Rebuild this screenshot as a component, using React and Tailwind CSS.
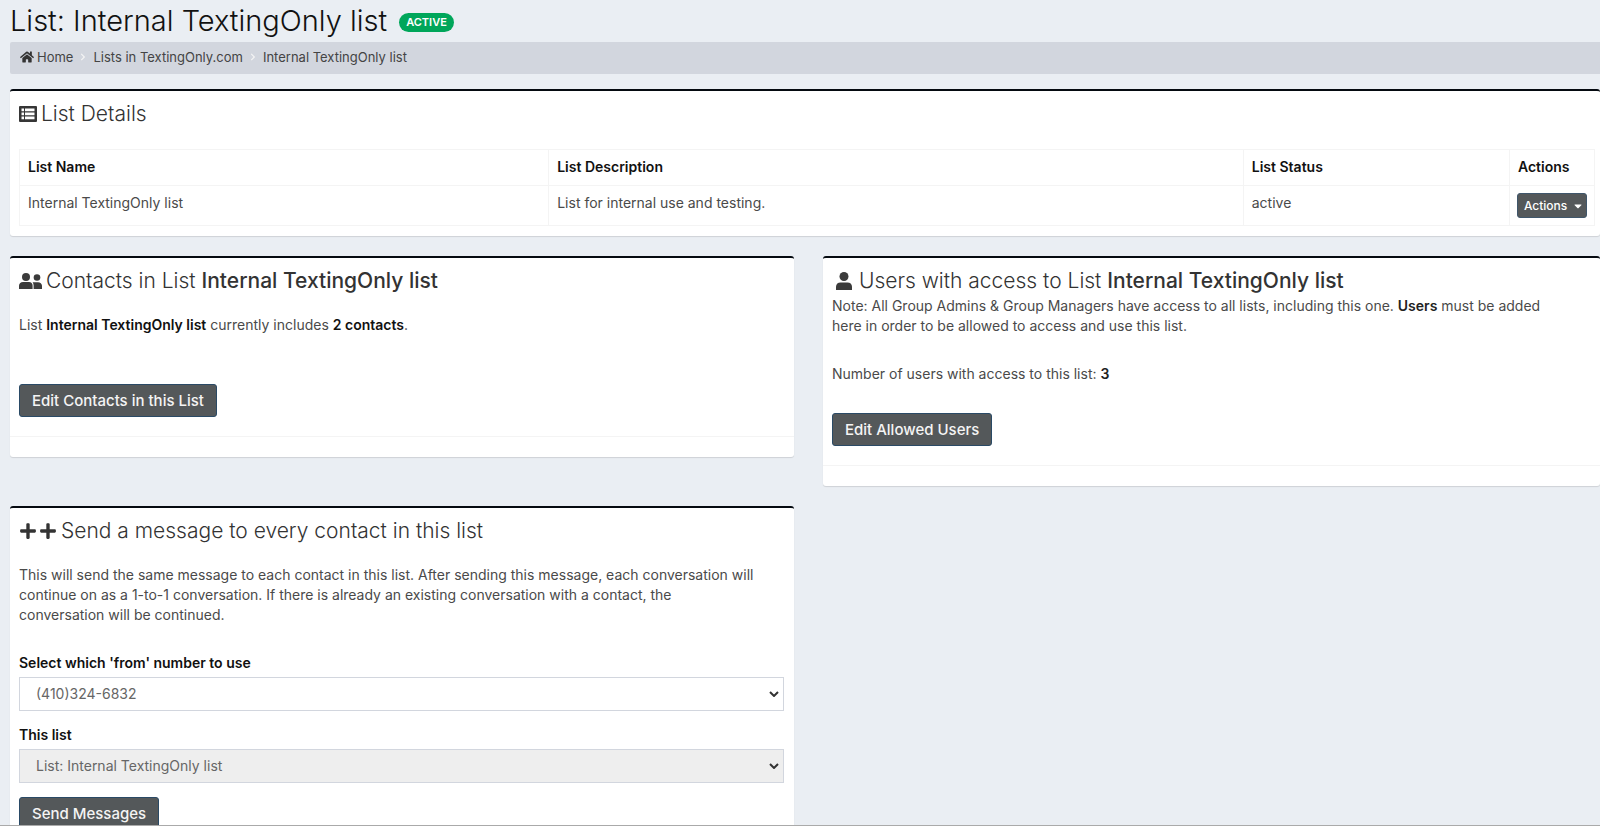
import { FaHome, FaPlus, FaChevronRight, FaCaretDown } from 'react-icons/fa';

const LIST_NAME = 'Internal TextingOnly list';

function ListIcon() {
  return (
    <svg viewBox="0 0 18 16" className="h-4 w-[18px] shrink-0" aria-hidden="true">
      <rect width="18" height="16" rx="1" fill="#363636" />
      <path fill="#fff" d="M2.500 2.500h2.500v2.700H2.500zM6 2.500h9.500v2.700H6zM2.500 6.500h2.500v2.700H2.500zM6 6.500h9.500v2.700H6zM2.500 10.500h2.500v2.700H2.500zM6 10.500h9.500v2.700H6z" />
    </svg>
  );
}

function UserIcon() {
  return (
    <svg viewBox="0 0 18 18" className="mr-[2px] ml-[3px] h-[18px] w-[18px] shrink-0" fill="#3b3b3b" aria-hidden="true">
      <circle cx="9" cy="4.5" r="4.5" />
      <path d="M1 18v-3.5C1 12 3 10.400 5.500 10.400h7c2.500 0 4.500 1.600 4.500 4.100V18z" />
    </svg>
  );
}

function UsersIcon() {
  return (
    <svg viewBox="0 0 23 16" className="h-4 w-[23px] shrink-0" fill="#3b3b3b" aria-hidden="true">
      <circle cx="7" cy="4" r="4" />
      <path d="M0 16v-3.200C0 10.500 1.800 9 4 9h6c2.200 0 3.600 1.500 3.600 3.800V16z" />
      <circle cx="18" cy="4.500" r="3.300" />
      <path d="M14.600 16v-3.400c0-1.400-.3-2.500-1-3.400h5.400c2.200 0 4 1.500 4 3.600V16z" />
    </svg>
  );
}

function Panel({ icon, title, footer, className = 'pr-[10px]', children }) {
  return (
    <section className={`rounded-[3px] border-t-2 border-[#050a10] bg-white pl-[9px] shadow-[0_1px_1px_rgba(0,0,0,0.12)] ${className}`}>
      <h2 className="flex items-center gap-1 pt-[10px] text-[21px] leading-[26px] font-light whitespace-nowrap text-[#333]">
        {icon}
        <span>{title}</span>
      </h2>
      {children}
      {footer && <div className="mt-[19px] -mr-[10px] -ml-[9px] h-[21px] border-t border-[#f4f4f4]" />}
    </section>
  );
}

function Button({ children }) {
  return (
    <button type="button" className="block h-[33px] rounded-[3px] border border-[#2a4a66] bg-[#54585a] px-3 text-[15px] font-medium text-[#f4f4f4]">
      {children}
    </button>
  );
}

function SelectField({ id, label, value, disabled }) {
  return (
    <div>
      <label htmlFor={id} className="block font-semibold text-[#111]">{label}</label>
      <div className="relative mt-1">
        <select
          id={id}
          disabled={disabled}
          className="block h-[34px] w-full appearance-none border border-[#d2d6de] bg-white px-4 text-sm text-[#666] disabled:bg-[#eee] disabled:opacity-100"
        >
          <option>{value}</option>
        </select>
        <svg viewBox="0 0 10 6" className="pointer-events-none absolute top-[14px] right-[5px] h-[6px] w-[10px]" fill="none" stroke="#333" strokeWidth="2" aria-hidden="true">
          <path d="M1 1l4 4 4-4" />
        </svg>
      </div>
    </div>
  );
}

export default function App() {
  return (
    <div className="h-screen overflow-hidden border-b border-[#aaa] bg-[#eaeef3] pl-[10px] font-[Inter,sans-serif] text-sm leading-5 text-[#4a4a4a]">
      <header className="flex h-[42px] items-center gap-3">
        <h1 className="text-[29px] leading-[40px] font-light text-[#111]">List: {LIST_NAME}</h1>
        <span className="mt-[2px] rounded-full bg-[#00a65a] px-[7px] text-[11px] leading-[19px] font-semibold text-white">ACTIVE</span>
      </header>

      <nav aria-label="Breadcrumb" className="flex h-8 items-center gap-[6px] rounded-l-[2px] bg-[#d2d6de] px-[10px] pb-[2px] text-[13px] text-[#444]">
        <a href="#home" className="flex items-center gap-[3px]">
          <FaHome className="text-sm text-[#333]" />
          Home
        </a>
        <FaChevronRight className="text-[8px] text-[#f4f4f4]" />
        <a href="#lists">Lists in TextingOnly.com</a>
        <FaChevronRight className="text-[8px] text-[#f4f4f4]" />
        <span>{LIST_NAME}</span>
      </nav>

      <Panel icon={<ListIcon />} title="List Details" className="mt-[15px] pr-[5px] pb-[10px]">
        <table className="mt-[22px] w-full table-fixed border-collapse text-left">
          <colgroup>
            <col className="w-[33.6%]" />
            <col className="w-[44.1%]" />
            <col className="w-[16.9%]" />
            <col />
          </colgroup>
          <thead>
            <tr className="h-9 text-[#111]">
              <th className="border border-[#f4f4f4] px-2 pb-[2px] font-semibold">List Name</th>
              <th className="border border-[#f4f4f4] px-2 pb-[2px] font-semibold">List Description</th>
              <th className="border border-[#f4f4f4] px-2 pb-[2px] font-semibold">List Status</th>
              <th className="border border-[#f4f4f4] px-2 pb-[2px] font-semibold">Actions</th>
            </tr>
          </thead>
          <tbody>
            <tr className="h-10 align-top">
              <td className="border border-[#f4f4f4] px-2 pt-[7px]">{LIST_NAME}</td>
              <td className="border border-[#f4f4f4] px-2 pt-[7px]">List for internal use and testing.</td>
              <td className="border border-[#f4f4f4] px-2 pt-[7px]">active</td>
              <td className="border border-[#f4f4f4] px-[7px] pt-[7px]">
                <button type="button" className="flex h-[25px] w-[70px] items-center justify-between rounded-[3px] border border-[#3f566b] bg-[#54585a] pr-[2px] pl-[6px] text-xs font-medium text-white">
                  Actions
                  <FaCaretDown className="text-xs" />
                </button>
              </td>
            </tr>
          </tbody>
        </table>
      </Panel>

      <div className="mt-5 grid grid-cols-[784fr_777fr] items-start gap-x-[29px] gap-y-5">
        <Panel icon={<UsersIcon />} title={<>Contacts in List <b className="font-medium">{LIST_NAME}</b></>} footer>
          <p className="mt-[21px] mb-[49px]">
            List <b className="font-semibold text-[#111]">{LIST_NAME}</b> currently includes <b className="font-semibold text-[#111]">2 contacts</b>.
          </p>
          <Button>Edit Contacts in this List</Button>
        </Panel>

        <Panel icon={<UserIcon />} title={<>Users with access to List <b className="font-medium">{LIST_NAME}</b></>} footer>
          <p className="mt-[2px]">
            Note: All Group Admins &amp; Group Managers have access to all lists, including this one. <b className="font-semibold text-[#222]">Users</b> must be added
            <br />
            here in order to be allowed to access and use this list.
          </p>
          <p className="mt-[28px] mb-[29px]">
            Number of users with access to this list: <b className="font-semibold text-[#222]">3</b>
          </p>
          <Button>Edit Allowed Users</Button>
        </Panel>

        <Panel
          icon={<span className="flex gap-[2px] text-lg text-[#333]"><FaPlus /><FaPlus /></span>}
          title="Send a message to every contact in this list"
          footer
        >
          <p className="mt-[21px] mb-[28px]">
            This will send the same message to each contact in this list. After sending this message, each conversation will
            <br />
            continue on as a 1-to-1 conversation. If there is already an existing conversation with a contact, the
            <br />
            conversation will be continued.
          </p>
          <form className="flex flex-col items-start gap-[14px]">
            <div className="flex w-full flex-col gap-[14px]">
              <SelectField id="from-number" label="Select which 'from' number to use" value="(410)324-6832" />
              <SelectField id="list" label="This list" value={`List: ${LIST_NAME}`} disabled />
            </div>
            <Button>Send Messages</Button>
          </form>
        </Panel>
      </div>
    </div>
  );
}
